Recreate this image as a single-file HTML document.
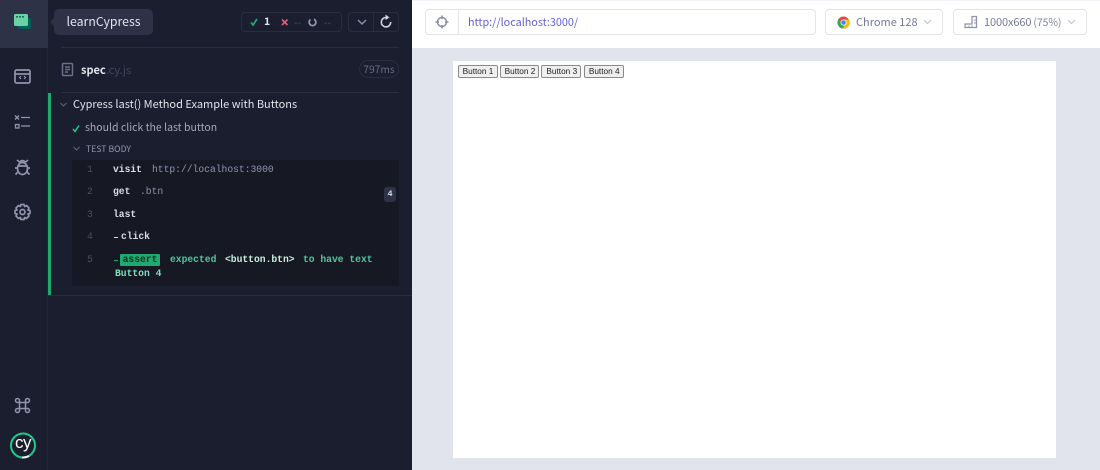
<!DOCTYPE html>
<html><head><meta charset="utf-8">
<style>
*{box-sizing:border-box}
html,body{margin:0;padding:0;width:1100px;height:470px;overflow:hidden;background:#fff}
body{position:relative;font-family:"Noto Sans CJK SC","Liberation Sans",sans-serif;font-size:11px}
.a{position:absolute;white-space:nowrap}
.m{font-family:"Liberation Mono",monospace;font-size:9.67px;line-height:12px;white-space:pre}
.b{font-weight:bold}
.btn{position:absolute;top:65px;height:13px;background:#efefef;border:1px solid #8a8a8a;border-radius:2px;font:8.25px/11px "Liberation Sans",sans-serif;color:#222;text-align:center;padding:0 0 0 1px}
</style></head><body>
<div class="a" style="left:0;top:0;width:412px;height:470px;background:#1b1e2e"></div>
<div class="a" style="left:0;top:0;width:48px;height:470px;background:#1b1e2e;border-right:1px solid #24273a"></div>
<div class="a" style="left:0;top:0;width:48px;height:48px;background:#2e3247"></div>
<!-- top icon -->
<svg class="a" style="left:0;top:0" width="48" height="48">
<rect x="18" y="18" width="13" height="11" rx="2" fill="#00635a"/>
<rect x="14" y="14" width="14" height="12" rx="1.500" fill="#69d3a7"/>
<rect x="16" y="16" width="2" height="1.600" fill="#1f6f5c"/><rect x="19" y="16" width="2" height="1.600" fill="#1f6f5c"/><rect x="22" y="16" width="2" height="1.600" fill="#1f6f5c"/>
</svg>
<!-- tooltip -->
<svg class="a" style="left:48px;top:9px" width="8" height="26"><path d="M2 13L6 9V17Z" fill="#2e3247"/></svg>
<div class="a" style="left:54px;top:9px;width:99px;height:26px;background:#2e3247;border-radius:5px;color:#e1e3ed;font-size:12.300px;line-height:25px;text-align:center">learnCypress</div>
<!-- nav icons -->
<svg class="a" style="left:0;top:60px" width="48" height="180" fill="none" stroke="#9095ad" stroke-width="1.700">
<rect x="15" y="10" width="15" height="13" rx="1.500"/><path d="M15 14H30" />
<path d="M21 16L19.500 17.500L21 19M24 16L25.500 17.500L24 19" stroke-width="1.100"/>
<path d="M15 55.500L19 59.500M19 55.500L15 59.500M21 57.500H30" stroke-width="1.300"/>
<rect x="15.500" y="64.500" width="3.500" height="3.500" stroke-width="1.300"/><path d="M21 66H30" stroke-width="1.300"/>
<ellipse cx="22.500" cy="108.500" rx="5" ry="6"/><path d="M18.500 106H26.500M19.500 102L17 100M25.500 102L28 100M17.500 108H15M27.500 108H30M18 112L15.500 114.500M27 112L29.500 114.500M20 102.500C20 100 25 100 25 102.500"/>
<circle cx="22.500" cy="152" r="2.500"/><path d="M21 144.500H24L24.600 146.500L26.500 145.500L29 148L28 150L30 150.600V153.400L28 154L29 156L26.500 158.500L24.600 157.500L24 159.500H21L20.400 157.500L18.500 158.500L16 156L17 154L15 153.400V150.600L17 150L16 148L18.500 145.500L20.400 146.500Z" stroke-linejoin="round"/>
</svg>
<svg class="a" style="left:0;top:390px" width="48" height="80" fill="none">
<path d="M19.500 12.500H25.500V18.500H19.500ZM19.500 12.500V10.500A2 2 0 1 0 17.500 12.500H19.500M25.500 12.500V10.500A2 2 0 1 1 27.500 12.500H25.500M19.500 18.500V20.500A2 2 0 1 1 17.500 18.500H19.500M25.500 18.500V20.500A2 2 0 1 0 27.500 18.500H25.500" stroke="#9095ad" stroke-width="1.500"/>
<circle cx="23" cy="55.500" r="12" stroke="#1fc98c" stroke-width="2"/>
<path d="M29 66A12 12 0 0 1 22 67.500" stroke="#e6f7f0" stroke-width="2"/>
</svg>
<div class="a" style="left:13px;top:434px;width:20px;text-align:center;color:#fff;font:normal 17px/18px 'Liberation Sans',sans-serif;letter-spacing:-.5px">cy</div>
<!-- stats -->
<div class="a" style="left:241px;top:12px;width:101px;height:20px;border:1px solid #2a2d40;border-radius:4px"></div>
<svg class="a" style="left:241px;top:12px" width="101" height="20" fill="none">
<path d="M10 10.500L12 13L16 7" stroke="#1fa971" stroke-width="1.800"/>
<path d="M41 7.500L46.500 13M46.500 7.500L41 13" stroke="#e45770" stroke-width="1.800"/>
<path d="M73 7.200A3.400 3.400 0 1 1 69.500 7.500" stroke="#9095ad" stroke-width="1.800"/>
</svg>
<div class="a b" style="left:264px;top:15px;color:#e1e3ed;font-size:10.500px;line-height:14px">1</div>
<div class="a" style="left:294px;top:15px;color:#4a4e66;font-size:10px;line-height:14px">--</div>
<div class="a" style="left:324px;top:15px;color:#4a4e66;font-size:10px;line-height:14px">--</div>
<div class="a" style="left:348px;top:12px;width:51px;height:20px;border:1px solid #2a2d40;border-radius:4px"></div>
<div class="a" style="left:373px;top:12px;width:1px;height:20px;background:#2a2d40"></div>
<svg class="a" style="left:348px;top:12px" width="51" height="20" fill="none">
<path d="M10 8L14 12L18 8" stroke="#8a8ea6" stroke-width="1.500"/>
<path d="M38 5.500A4.700 4.700 0 1 0 42.700 10" stroke="#d0d2e0" stroke-width="1.600"/><path d="M37.500 2.500L41.500 5.500L37.500 8Z" fill="#d0d2e0"/>
</svg>
<div class="a" style="left:61px;top:47px;width:338px;height:1px;background:#2a2d40"></div>
<!-- spec -->
<svg class="a" style="left:61px;top:62px" width="14" height="15" fill="none" stroke="#6b6f88" stroke-width="1.500"><rect x="1.500" y="1.500" width="10" height="12" rx="1"/><path d="M4 5H9M4 7.500H9M4 10H7"/></svg>
<div class="a b" style="left:81px;top:63px;color:#e1e3ed;font-size:11px;line-height:15px">spec<span style="font-weight:normal;color:#43465c">.cy.js</span></div>
<div class="a" style="left:359px;top:60px;width:40px;height:18px;border:1px solid #2a2d40;border-radius:9px;color:#666a82;font-size:10.300px;line-height:16px;text-align:center">797ms</div>
<div class="a" style="left:61px;top:92px;width:338px;height:1px;background:#2a2d40"></div>
<!-- suite -->
<div class="a" style="left:48px;top:93px;width:3px;height:203px;background:#1fa971"></div>
<div class="a" style="left:48px;top:295px;width:364px;height:1px;background:#2a2d40"></div>
<svg class="a" style="left:59px;top:100px" width="10" height="10" fill="none"><path d="M1.500 3L4.500 6L7.500 3" stroke="#5a5e76" stroke-width="1.200"/></svg>
<div class="a" style="left:73px;top:96px;color:#e1e3ed;font-size:11px;line-height:16px">Cypress last() Method Example with Buttons</div>
<svg class="a" style="left:71px;top:123px" width="11" height="11" fill="none"><path d="M2 6L4 8.500L8 2.500" stroke="#1fc98c" stroke-width="1.500"/></svg>
<div class="a" style="left:85px;top:120px;color:#a4a7bb;font-size:10.500px;line-height:16px">should click the last button</div>
<svg class="a" style="left:72px;top:144px" width="10" height="10" fill="none"><path d="M1.500 3L4.500 6L7.500 3" stroke="#5a5e76" stroke-width="1.200"/></svg>
<div class="a" style="left:86px;top:142px;color:#9095ad;font-size:8.700px;line-height:14px">TEST BODY</div>
<!-- code -->
<div class="a" style="left:72px;top:160px;width:327px;height:126px;background:#161824"></div>
<div class="a m" style="left:87px;top:164px;color:#4a4e66">1</div>
<div class="a m" style="left:87px;top:186px;color:#4a4e66">2</div>
<div class="a m" style="left:87px;top:209px;color:#4a4e66">3</div>
<div class="a m" style="left:87px;top:231px;color:#4a4e66">4</div>
<div class="a m" style="left:87px;top:254px;color:#4a4e66">5</div>
<div class="a m b" style="left:113px;top:164px;color:#d8dae6">visit</div>
<div class="a m" style="left:152px;top:164px;color:#9095ad">http://localhost:3000</div>
<div class="a m b" style="left:113px;top:186px;color:#d8dae6">get</div>
<div class="a m" style="left:140px;top:186px;color:#9095ad">.btn</div>
<div class="a b" style="left:384px;top:187px;width:12px;height:15px;background:#2e3247;border-radius:3px;color:#d8dae6;font:bold 8.500px/15px 'Liberation Mono',monospace;text-align:center">4</div>
<div class="a m b" style="left:113px;top:209px;color:#d8dae6">last</div>
<div class="a" style="left:114px;top:237px;width:4px;height:1px;background:#d8dae6"></div>
<div class="a m b" style="left:121px;top:231px;color:#d8dae6">click</div>
<div class="a" style="left:114px;top:260px;width:4px;height:1px;background:#1fa971"></div>
<div class="a m b" style="left:120px;top:254px;width:40px;height:12px;background:#1fa971;border-radius:1px;color:#10301f;text-align:center;line-height:11px">assert</div>
<div class="a m b" style="left:170px;top:254px;color:#4fc79c">expected</div>
<div class="a m b" style="left:225px;top:254px;color:#c4f0dc">&lt;button.btn&gt;</div>
<div class="a m b" style="left:303px;top:254px;color:#4fc79c">to have text</div>
<div class="a m b" style="left:115px;top:268px;color:#7fe0b8">Button 4</div>
<!-- right -->
<div class="a" style="left:412px;top:48px;width:688px;height:422px;background:#e1e3ed"></div>
<div class="a" style="left:412px;top:0;width:688px;height:1px;background:#f3f4fa"></div>
<div class="a" style="left:425px;top:9px;width:391px;height:26px;background:#fff;border:1px solid #e1e3ed;border-radius:4px"></div>
<div class="a" style="left:458px;top:9px;width:1px;height:26px;background:#e1e3ed"></div>
<svg class="a" style="left:434px;top:14px" width="16" height="16" fill="none" stroke="#8a8ea6" stroke-width="1.500"><circle cx="8" cy="8" r="4.500"/><path d="M8 1.500V5M8 11V14.500M1.500 8H5M11 8H14.500"/></svg>
<div class="a" style="left:468px;top:14px;color:#5f5fd4;font-size:10.800px;line-height:16px">http://localhost:3000/</div>
<div class="a" style="left:825px;top:9px;width:118px;height:26px;background:#fff;border:1px solid #e1e3ed;border-radius:4px"></div>
<svg class="a" style="left:837px;top:16px" width="13" height="13" viewBox="0 0 13 13"><circle cx="6.500" cy="6.500" r="6" fill="#e8453c"/><path d="M6.500 6.500L1.300 3.500A6 6 0 0 0 6.500 12.500Z" fill="#34a853"/><path d="M6.500 3.500H12A6 6 0 0 1 6.500 12.500Z" fill="#fbbc05"/><circle cx="6.500" cy="6.500" r="3" fill="#fff"/><circle cx="6.500" cy="6.500" r="2.300" fill="#4285f4"/></svg>
<div class="a" style="left:856px;top:14px;color:#747994;font-size:11px;line-height:16px">Chrome 128</div>
<svg class="a" style="left:923px;top:17px" width="10" height="10" fill="none"><path d="M1 3L4.500 6.500L8 3" stroke="#c4c7d6" stroke-width="1.200"/></svg>
<div class="a" style="left:953px;top:9px;width:134px;height:26px;background:#fff;border:1px solid #e1e3ed;border-radius:4px"></div>
<svg class="a" style="left:964px;top:15px" width="14" height="14" fill="none" stroke="#9095ad" stroke-width="1.300"><path d="M1 9H8V1.500H12.500V12.500H1Z"/><path d="M5 12V10.500M8 12V10.500M10 8H12M10 5H12" stroke-width="1"/></svg>
<div class="a" style="left:984px;top:14px;color:#747994;font-size:11px;line-height:16px;letter-spacing:-.1px">1000x660<span style="margin-left:2px;color:#7f849e;font-size:10.500px">(75%)</span></div>
<svg class="a" style="left:1067px;top:17px" width="10" height="10" fill="none"><path d="M1 3L4.500 6.500L8 3" stroke="#c4c7d6" stroke-width="1.200"/></svg>
<div class="a" style="left:453px;top:60.500px;width:603px;height:397.500px;background:#fff"></div>
<div class="btn" style="left:457.500px;width:40px">Button 1</div>
<div class="btn" style="left:500px;width:39px">Button 2</div>
<div class="btn" style="left:541.300px;width:40px">Button 3</div>
<div class="btn" style="left:583.700px;width:40px">Button 4</div>
</body></html>
